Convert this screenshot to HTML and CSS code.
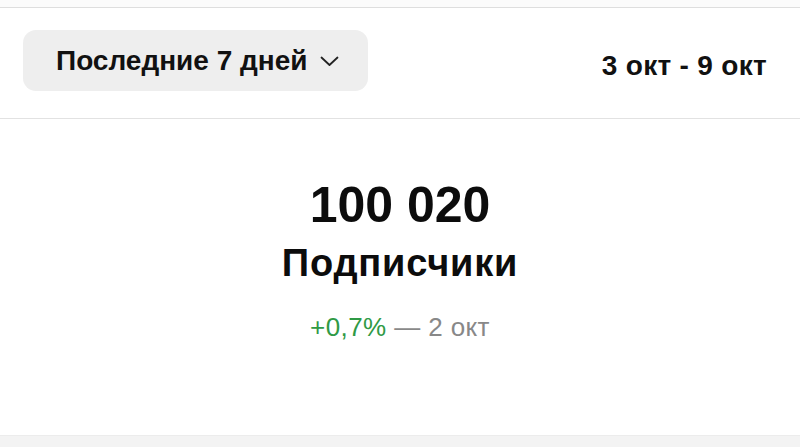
FILE: index.html
```html
<!DOCTYPE html>
<html lang="ru">
<head>
<meta charset="utf-8">
<link rel="stylesheet" href="styles.css">
</head>
<body>
<div class="page">
  <div class="topstrip"></div>
  <div class="toolbar">
    <button class="period"><span>Последние 7 дней</span>
      <svg class="chev" width="19" height="11" viewBox="0 0 19 11"><path d="M1.5 1.5 L9.5 9 L17.5 1.5" fill="none" stroke="#222" stroke-width="1.8" stroke-linecap="round" stroke-linejoin="round"/></svg>
    </button>
    <div class="range">3 окт - 9 окт</div>
  </div>
  <div class="stat">
    <div class="value">100 020</div>
    <div class="label">Подписчики</div>
    <div class="delta"><span class="up">+0,7%</span> — 2 окт</div>
  </div>
  <div class="bottomstrip"></div>
</div>
</body>
</html>
```
FILE: styles.css
```css
html, body { margin: 0; padding: 0; background: #fff; }
body { font-family: "Liberation Sans", Arial, sans-serif; color: #111; }
.page { width: 800px; height: 447px; display: flex; flex-direction: column; overflow: hidden; }
.topstrip { height: 7px; background: #fbfbfb; border-bottom: 1px solid #dedede; flex: none; }
.toolbar { height: 111px; flex: none; box-sizing: border-box; border-bottom: 1px solid #e2e2e2; display: flex; align-items: flex-start; justify-content: space-between; padding: 22px 33px 0 23px; }
.period { height: 61px; width: 345px; border: none; border-radius: 13px; background: #eeeeee; font-family: inherit; font-weight: bold; font-size: 28px; line-height: 61px; color: #111; display: flex; align-items: center; padding: 0 0 0 33px; gap: 12px; }
.chev { margin-top: 1px; }
.range { font-weight: bold; font-size: 28px; line-height: 61px; margin-top: 5px; letter-spacing: 0.3px; color: #111; }
.stat { flex: 1; display: flex; flex-direction: column; align-items: center; padding-top: 58px; }
.value { font-weight: bold; font-size: 50px; line-height: 56px; color: #0c0c0c; }
.label { font-weight: bold; font-size: 38px; line-height: 44px; margin-top: 8px; letter-spacing: 0.8px; color: #0c0c0c; }
.delta { font-size: 26px; line-height: 30px; margin-top: 27px; letter-spacing: 0.4px; color: #888888; }
.up { color: #2f9a45; }
.bottomstrip { height: 11px; flex: none; background: #f3f3f3; border-top: 1px solid #ececec; }
```
